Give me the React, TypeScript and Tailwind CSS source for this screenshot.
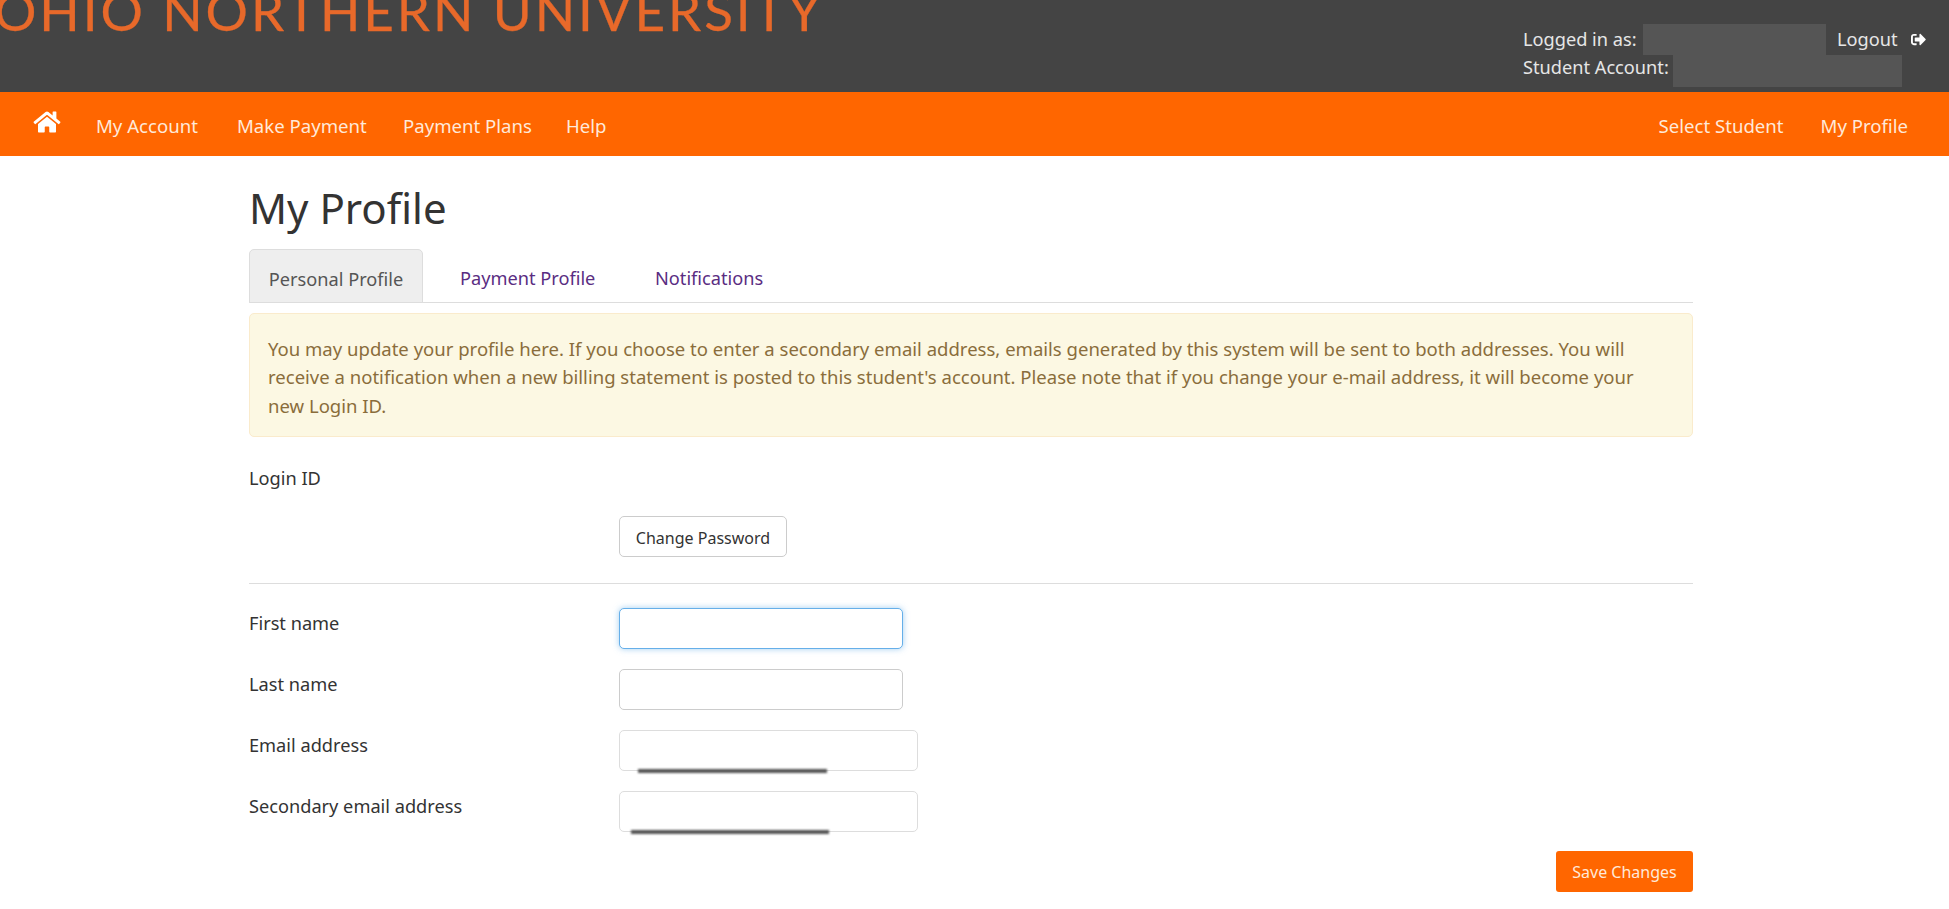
import { FaHome, FaSignOutAlt } from 'react-icons/fa';

const navLeft = [
  { label: 'My Account', cls: 'w-[104px] mr-[37px]' },
  { label: 'Make Payment', cls: 'w-[130px] mr-[36px]' },
  { label: 'Payment Plans', cls: 'w-[126px] mr-[37px]' },
  { label: 'Help', cls: 'w-[41px]' },
];

const fields = [
  { label: 'First name', input: 'w-[284px] border-[#66afe9] shadow-[0_0_6px_rgba(102,175,233,0.6)]', smudge: '' },
  { label: 'Last name', input: 'w-[284px] border-[#ccc]', smudge: '' },
  { label: 'Email address', input: 'w-[299px] border-[#ddd]', smudge: 'left-[19px] w-[189px]' },
  { label: 'Secondary email address', input: 'w-[299px] border-[#ddd]', smudge: 'left-[12px] w-[198px]' },
];

export default function App() {
  return (
    <div className="min-h-[909px] bg-white text-[18.2px] text-[#333] overflow-hidden font-['Noto_Sans',sans-serif]">
      {/* top bar, the logo text is cut off by the window */}
      <header className="h-[92px] bg-[#444444] flex justify-between overflow-hidden">
        <div className="-ml-[6px] -mt-[24px] h-[70px] text-[53px] leading-[70px] tracking-[2.9px] text-[#e8692a] whitespace-nowrap font-['Lato',sans-serif] [-webkit-text-stroke:0.3px_#e8692a]">
          OHIO NORTHERN UNIVERSITY
        </div>
        <div className="w-[426px] pt-[24px] text-[#e6e6e6]">
          <div className="flex items-center h-[31px]">
            <span className="w-[120px]">Logged in as:</span>
            <span className="w-[183px] h-full bg-[#555555]" />
            <span className="ml-[11px] w-[62px]">Logout</span>
            <FaSignOutAlt className="ml-[11px] w-[17px] h-[15px] text-white" />
          </div>
          <div className="flex items-center h-[32px]">
            <span className="w-[150px] -mt-[7px] whitespace-nowrap">Student Account:</span>
            <span className="w-[229px] h-full bg-[#555555]" />
          </div>
        </div>
      </header>

      <nav className="h-[64px] bg-[#ff6600] flex items-center justify-between pl-[33px] pr-[41px] text-[18.6px] text-[#ffe9d9]">
        <div className="flex items-center">
          <FaHome className="w-[28px] h-[24px] mr-[35px] -mt-[3px] text-white" />
          {navLeft.map((item) => (
            <a key={item.label} className={`${item.cls} whitespace-nowrap pt-[4px]`}>
              {item.label}
            </a>
          ))}
        </div>
        <div className="flex items-center gap-[37px] pt-[4px]">
          <a className="whitespace-nowrap">Select Student</a>
          <a className="whitespace-nowrap">My Profile</a>
        </div>
      </nav>

      <main className="ml-[249px] w-[1444px]">
        <h1 className="mt-[22px] h-[60px] text-[42px] leading-[60px] font-normal">My Profile</h1>

        <div className="mt-[11px] h-[54px] flex border-b border-[#ddd] text-[#5a2d82]">
          <div className="w-[174px] h-[54px] flex items-center justify-center pt-[7px] bg-[#eeeeee] border border-[#ddd] rounded-t-[5px] text-[#555]">
            Personal Profile
          </div>
          <div className="w-[232px] h-[53px] flex items-center pl-[37px] pt-[7px]">Payment Profile</div>
          <div className="h-[53px] flex items-center pt-[7px]">Notifications</div>
        </div>

        <div className="mt-[10px] h-[124px] bg-[#fcf8e3] border border-[#faebcc] rounded-[5px] pl-[18px] pr-[40px] py-[21px] text-[18.55px] text-[#8a6d3b] leading-[28.3px]">
          You may update your profile here. If you choose to enter a secondary email address, emails generated by this system will be sent to both addresses. You will receive a notification when a new billing statement is posted to this student's account. Please note that if you change your e-mail address, it will become your new Login ID.
        </div>

        <div className="mt-[27px] h-[30px] flex items-center">Login ID</div>

        <div className="mt-[22px] pl-[370px]">
          <button className="w-[168px] h-[41px] pt-[2px] bg-white border border-[#ccc] rounded-[5px] text-[16px]">
            Change Password
          </button>
        </div>

        <hr className="mt-[26px] border-t border-[#ddd]" />

        <div className="mt-[24px] flex flex-col gap-[20px]">
          {fields.map((f) => (
            <div key={f.label} className="flex h-[41px]">
              <label className="w-[370px] pt-[1px] leading-[28px]">{f.label}</label>
              <div className="relative">
                <input className={`${f.input} h-[41px] block bg-white border rounded-[5px] outline-none`} />
                {f.smudge && (
                  <div className={`${f.smudge} absolute top-[39px] h-[4px] bg-[#555] blur-[1px]`} />
                )}
              </div>
            </div>
          ))}
        </div>

        <div className="mt-[19px] flex justify-end">
          <button className="w-[137px] h-[41px] pt-[1px] bg-[#ff6600] rounded-[3px] text-[#ffe9d9] text-[16px]">
            Save Changes
          </button>
        </div>
      </main>
    </div>
  );
}
